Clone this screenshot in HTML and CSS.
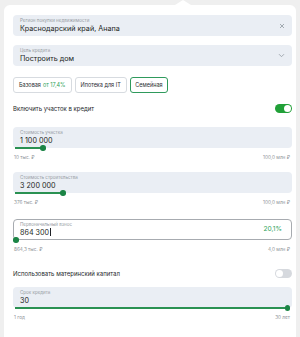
FILE: index.html
```html
<!DOCTYPE html>
<html lang="ru">
<head>
<meta charset="utf-8">
<link rel="stylesheet" href="styles.css">
</head>
<body>
<div class="card">
  <div class="pointer"></div>

  <div class="field f-region">
    <div class="field-text">
      <div class="label">Регион покупки недвижимости</div>
      <div class="value">Краснодарский край, Анапа</div>
    </div>
    <svg class="icon" width="6" height="6" viewBox="0 0 6 6"><path d="M1 1L5 5M5 1L1 5" stroke="#9aa1a9" stroke-width="0.9" fill="none"/></svg>
  </div>

  <div class="field f-goal">
    <div class="field-text">
      <div class="label">Цель кредита</div>
      <div class="value">Построить дом</div>
    </div>
    <svg class="icon" width="7" height="5" viewBox="0 0 7 5"><path d="M1 1.2L3.5 3.7L6 1.2" stroke="#9aa1a9" stroke-width="0.9" fill="none"/></svg>
  </div>

  <div class="tabs">
    <div class="tab">Базовая <span class="green">от 17,4%</span></div>
    <div class="tab">Ипотека для IT</div>
    <div class="tab active">Семейная</div>
  </div>

  <div class="toggle-row tr-1">
    <span>Включить участок в кредит</span>
    <div class="toggle on"><div class="knob"></div></div>
  </div>

  <div class="group g-1">
    <div class="field slider">
      <div class="field-text">
        <div class="label">Стоимость участка</div>
        <div class="value">1 100 000</div>
      </div>
      <div class="track"><div class="fill" style="width:27px"></div><div class="thumb"></div></div>
    </div>
    <div class="hints"><span>10 тыс. ₽</span><span>100,0 млн ₽</span></div>
  </div>

  <div class="group g-2">
    <div class="field slider">
      <div class="field-text">
        <div class="label">Стоимость строительства</div>
        <div class="value">3 200 000</div>
      </div>
      <div class="track"><div class="fill" style="width:47px"></div><div class="thumb"></div></div>
    </div>
    <div class="hints"><span>376 тыс. ₽</span><span>100,0 млн ₽</span></div>
  </div>

  <div class="group g-3">
    <div class="field slider focused">
      <div class="field-text">
        <div class="label">Первоначальный взнос</div>
        <div class="value">864 300<span class="caret"></span></div>
      </div>
      <div class="percent">20,1%</div>
      <div class="track"><div class="fill" style="width:0px"></div><div class="thumb"></div></div>
    </div>
    <div class="hints"><span>864,3 тыс. ₽</span><span>4,0 млн ₽</span></div>
  </div>

  <div class="toggle-row tr-2">
    <span>Использовать материнский капитал</span>
    <div class="toggle"><div class="knob"></div></div>
  </div>

  <div class="group g-4">
    <div class="field slider">
      <div class="field-text">
        <div class="label">Срок кредита</div>
        <div class="value">30</div>
      </div>
      <div class="track"><div class="fill full"></div><div class="thumb"></div></div>
    </div>
    <div class="hints"><span>1 год</span><span>30 лет</span></div>
  </div>
</div>
</body>
</html>
```

FILE: styles.css
```css
* { box-sizing: border-box; }
html, body { margin: 0; padding: 0; }
body {
  background: #efefef;
  width: 300px;
  height: 337px;
  overflow: hidden;
  font-family: Inter, "Noto Sans", sans-serif;
  color: #1f2226;
}
.card {
  position: relative;
  margin: 5px 4px 0 4px;
  background: #ffffff;
  border-radius: 6px 6px 0 0;
  padding: 10px 4px 20px 9px;
  min-height: 340px;
}
.pointer {
  position: absolute;
  top: -5px;
  left: 171px;
  width: 0;
  height: 0;
  border-left: 8px solid transparent;
  border-right: 8px solid transparent;
  border-bottom: 5px solid #ffffff;
}
.field {
  position: relative;
  display: flex;
  align-items: center;
  height: 21px;
  background: #eaeef4;
  border-radius: 4px;
  padding: 0 7px 0 7px;
}
.field-text { flex: 1; display: flex; flex-direction: column; justify-content: center; }
.label {
  font-size: 4.5px;
  line-height: 6px;
  color: #969ba2;
}
.value {
  font-size: 7.2px;
  line-height: 9px;
  font-weight: 400;
  color: #1c1f23;
  display: flex;
  align-items: center;
}
.icon { flex: none; }
.f-goal { margin-top: 9px; }
.tabs {
  display: flex;
  gap: 3px;
  margin-top: 11px;
}
.tab {
  height: 16px;
  display: flex;
  align-items: center;
  padding: 0 5px;
  border: 1px solid #d7dbe0;
  border-radius: 3px;
  font-size: 5.5px;
  color: #2a2d31;
  white-space: nowrap;
}
.tab .green { color: #2ea35a; margin-left: 2px; }
.tab.active {
  border: 1.5px solid #2f9a5c;
  padding: 0 4.5px;
}
.toggle-row {
  display: flex;
  align-items: center;
  justify-content: space-between;
  font-size: 6px;
  color: #24272b;
  height: 9px;
}
.tr-1 { margin-top: 11px; }
.tr-2 { margin-top: 17px; }
.toggle {
  width: 17px;
  height: 9px;
  border-radius: 5px;
  background: #d6d9de;
  display: flex;
  align-items: center;
  padding: 1px;
}
.toggle .knob {
  width: 7px;
  height: 7px;
  border-radius: 50%;
  background: #ffffff;
}
.toggle.on { background: #21a038; justify-content: flex-end; }
.group { display: flex; flex-direction: column; }
.g-1 { margin-top: 14px; }
.g-2 { margin-top: 12px; }
.g-3 { margin-top: 14px; }
.g-4 { margin-top: 9px; }
.slider { padding-bottom: 1px; }
.track {
  position: absolute;
  left: 2px;
  right: 2px;
  bottom: -1px;
  height: 2px;
  display: flex;
  align-items: center;
}
.fill {
  height: 1.5px;
  background: #2a9152;
}
.fill.full { flex: 1; }
.thumb {
  width: 5.5px;
  height: 5.5px;
  border-radius: 50%;
  background: #1b8445;
  margin-left: -2px;
  flex: none;
}
.hints {
  display: flex;
  justify-content: space-between;
  font-size: 4.7px;
  color: #8d9298;
  margin-top: 6px;
  padding: 0 2px 0 1px;
}
.focused {
  background: #ffffff;
  border: 1px solid #a7abb0;
  padding-left: 6px;
}
.focused .track { left: 1px; bottom: -2px; }
.percent {
  font-size: 6.6px;
  color: #2ea35a;
  margin-right: 2px;
}
.caret {
  display: inline-block;
  width: 0.7px;
  height: 8px;
  background: #1f2226;
  margin-left: 0.5px;
}
```
